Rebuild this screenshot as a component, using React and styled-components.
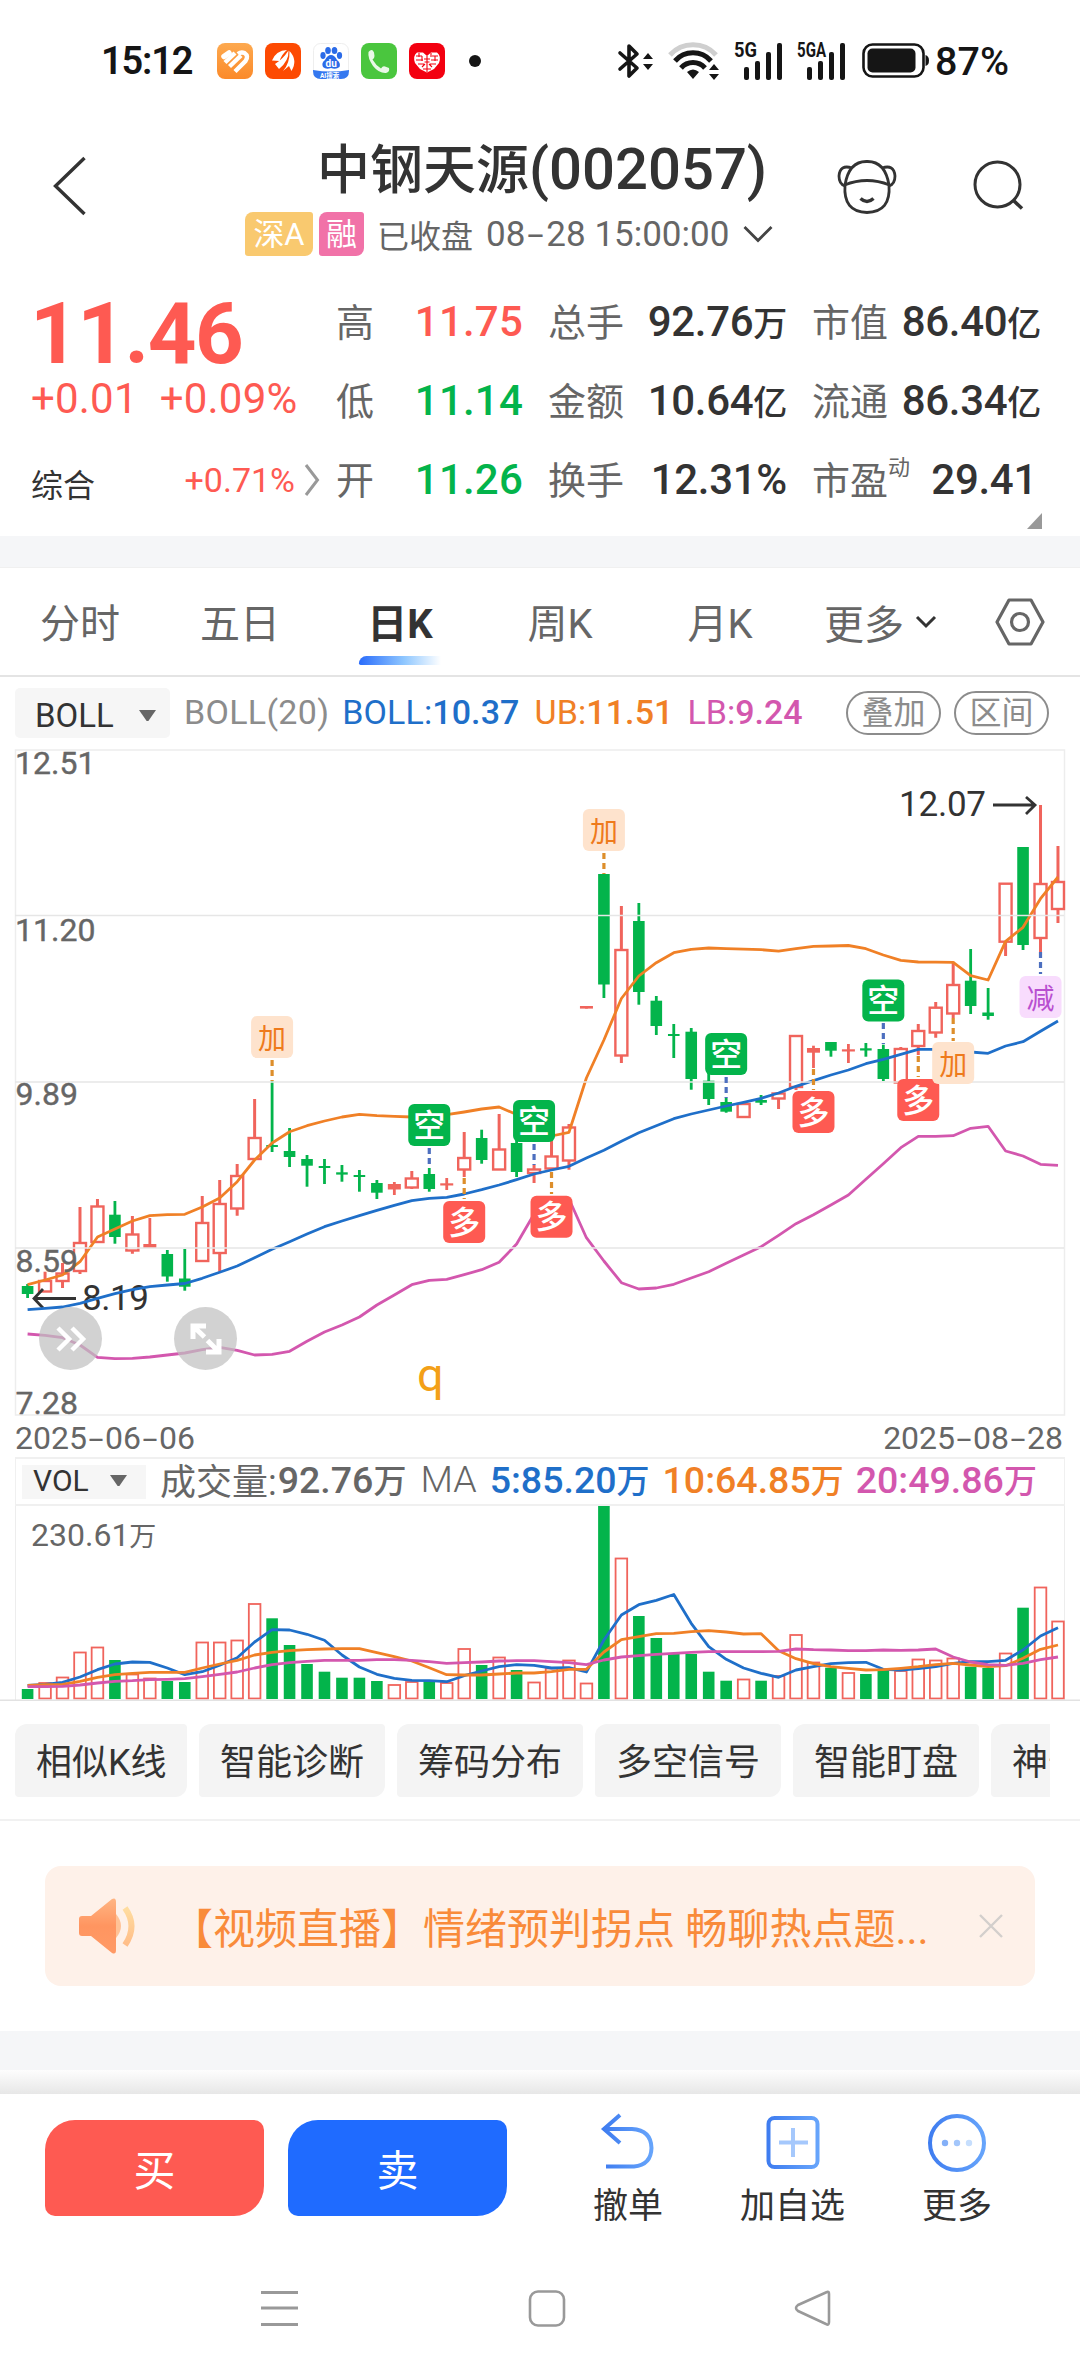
import { useState } from "react";
import styled, { createGlobalStyle } from "styled-components";

const RED = "#f0645c";
const GREEN = "#03b44b";
const BLUE = "#1f6fc9";
const ORANGE = "#f08026";
const PINK = "#d357ae";

const GlobalStyle = createGlobalStyle`
  * { box-sizing: border-box; }
  body {
    margin: 0;
    background: #fff;
    font-family: Roboto, "Noto Sans CJK SC", sans-serif;
    color: #333;
  }
  svg { display: block; flex: none; overflow: visible; }
`;

// [kind, high, top, bottom, low] : r = 양봉(빈 박스), f = 꽉 찬 빨강, g = 초록
const candles = [
  ["g", 1284, 1286, 1294, 1298], ["r", 1271.7, 1281, 1291.5, 1291.5], ["r", 1263, 1273.5, 1281, 1288],
  ["r", 1207, 1243, 1271, 1274], ["r", 1199, 1206.5, 1242, 1242], ["g", 1201, 1214.7, 1237, 1243.7],
  ["r", 1216, 1234.5, 1250.5, 1253.7], ["f", 1218, 1244, 1248, 1248], ["g", 1250, 1254, 1276.5, 1281.7],
  ["g", 1249, 1278.5, 1286.7, 1290.7], ["r", 1196, 1223, 1261, 1261], ["r", 1180, 1204, 1253, 1271.7],
  ["r", 1164, 1176, 1208.5, 1215.7], ["r", 1099, 1138, 1159, 1159], ["g", 1081, 1145, 1147, 1152],
  ["g", 1128, 1151, 1157, 1167], ["g", 1155, 1159, 1165.7, 1186.7], ["g", 1159, 1166, 1168, 1184],
  ["g", 1165, 1172.3, 1174.6, 1181.7], ["g", 1170, 1175, 1177, 1191.7], ["g", 1180, 1183, 1192.7, 1199],
  ["f", 1182, 1184, 1189.5, 1195], ["r", 1171, 1178.5, 1187.5, 1189], ["g", 1168, 1174, 1189, 1191.7],
  ["f", 1178, 1183.3, 1185.5, 1190], ["r", 1132, 1158, 1169.5, 1177], ["g", 1129.7, 1138, 1160, 1163.7],
  ["r", 1114, 1149.5, 1169.5, 1169.5], ["g", 1141, 1143, 1172, 1177], ["r", 1165, 1169.5, 1173, 1183],
  ["r", 1141, 1156.5, 1168.5, 1170], ["r", 1124, 1127.5, 1160.5, 1169.7], ["f", 1006, 1006, 1008.6, 1008.6],
  ["g", 874, 874, 984.5, 998], ["r", 906, 950, 1055.5, 1063], ["g", 903, 921, 992, 1004.7],
  ["g", 996, 1000.7, 1026, 1035], ["g", 1024, 1034, 1036, 1058], ["g", 1028, 1031.7, 1079, 1089.7],
  ["g", 1068, 1080.7, 1099, 1105], ["g", 1098, 1102, 1111.7, 1112.7], ["r", 1104, 1104, 1117, 1117],
  ["g", 1095, 1100, 1102.7, 1105], ["r", 1093.5, 1093.5, 1098.5, 1109], ["r", 1036, 1036, 1087, 1090],
  ["f", 1045.7, 1048, 1052.7, 1068], ["g", 1042, 1042, 1050.7, 1056.7], ["f", 1044, 1049.3, 1051.5, 1063],
  ["g", 1043, 1048.3, 1050.5, 1056.7], ["g", 1044.7, 1049, 1079, 1081], ["r", 1047, 1049, 1082.5, 1082.5],
  ["r", 1024, 1031, 1046, 1055], ["r", 1002, 1007.7, 1032.5, 1037.7], ["r", 961.7, 985, 1013.5, 1018],
  ["g", 949, 980.7, 1006, 1014], ["g", 988, 1012.5, 1016, 1019.7], ["r", 883.7, 883.7, 941.7, 956],
  ["g", 847, 847, 945, 950], ["r", 805, 884, 938, 952], ["r", 846, 882, 909, 923],
];

const upper = [
  1284.7, 1280, 1275, 1261.7, 1237, 1229, 1221, 1215.7, 1214.7, 1214.3, 1207, 1198, 1181.7, 1160, 1143, 1131.7,
  1125.7, 1121, 1117, 1114.3, 1115.7, 1116.3, 1117, 1116.7, 1114.7, 1112, 1109, 1107, 1114.5, 1131, 1136, 1132.3,
  1078, 1040, 998.5, 976, 962.7, 952.7, 949.3, 948, 948.7, 949.2, 949.7, 951.2, 948.7, 946.4, 946, 945.5, 948.7,
  955, 960.3, 962, 962.2, 962.4, 975.7, 980, 941.3, 927.3, 898.7, 877,
];
const middle = [
  1309.7, 1308.3, 1307, 1303.3, 1298.3, 1293.7, 1289.7, 1286.7, 1285, 1283.5, 1278.3, 1272.3, 1266, 1257.7, 1249.3,
  1241.7, 1234, 1226.7, 1221, 1215.7, 1210.3, 1205.3, 1200.7, 1198.3, 1197.3, 1194, 1189.7, 1185, 1179.7, 1174, 1170,
  1166.3, 1158, 1150.3, 1141.3, 1132.7, 1125.7, 1118.7, 1114, 1110, 1106, 1102.3, 1098.3, 1093, 1086.3, 1080.7, 1075,
  1070, 1063.7, 1059.3, 1054.3, 1049.3, 1049.3, 1050, 1052, 1053.3, 1046, 1041.7, 1031.3, 1021,
];
const lower = [
  1334, 1335.3, 1337.7, 1345, 1357.3, 1358.7, 1358.3, 1357, 1355, 1353, 1349.7, 1347.3, 1350.3, 1355, 1354.3, 1351.3,
  1341.3, 1332, 1325, 1317, 1305, 1295, 1284.7, 1280.3, 1279.3, 1274.7, 1269.7, 1262.3, 1244, 1214, 1203, 1199,
  1237.7, 1261, 1282.7, 1289, 1288, 1284.3, 1278, 1271.7, 1263.3, 1255, 1246.7, 1235.3, 1223.7, 1214.7, 1205, 1195,
  1179.3, 1163.7, 1147.7, 1136.3, 1136.3, 1135.7, 1128.3, 1126.3, 1151, 1156, 1164.3, 1165.3,
];

const volumes = [
  1689, 1683, 1677.5, 1652.5, 1647.5, 1660, 1674.5, 1678.5, 1681, 1682, 1642.5, 1642.5, 1640.5, 1604, 1618.3, 1645,
  1664, 1671.7, 1677.7, 1677.7, 1681, 1685, 1682, 1680.7, 1683, 1649, 1665, 1657.5, 1670, 1682.5, 1668.5, 1660.5,
  1683.5, 1506, 1558.5, 1616, 1638, 1653.7, 1654, 1671.7, 1680.7, 1679.5, 1680.7, 1676, 1635, 1662.5, 1667.7, 1673,
  1674, 1670, 1671, 1659.5, 1660.5, 1658.5, 1666.7, 1668, 1653.5, 1607.7, 1587.5, 1621.5,
];
const ma5 = [
  1685.3, 1684.3, 1682.3, 1677, 1669.7, 1664, 1662, 1662.3, 1668, 1674.7, 1671.7, 1665.3, 1657.7, 1642, 1629.7, 1630,
  1634.3, 1640.3, 1655, 1667, 1674.3, 1678.3, 1680.3, 1680.7, 1681.7, 1675.7, 1671, 1666.7, 1664.7, 1665.3, 1668,
  1667.7, 1672, 1640, 1615, 1604.7, 1600.3, 1594.5, 1623.3, 1646.7, 1659.3, 1668, 1673.3, 1677.3, 1670, 1666.7,
  1663.7, 1662.7, 1662.3, 1669.3, 1670, 1668.7, 1666.7, 1663.3, 1661.7, 1661.7, 1660.3, 1650, 1636, 1627.7,
];
const ma10 = [
  1685.3, 1684.7, 1684.3, 1681.3, 1677.3, 1674.7, 1673.3, 1672.3, 1672.3, 1672.3, 1668, 1664, 1660.3, 1655, 1652.3,
  1650.7, 1649.7, 1649, 1648.7, 1648.7, 1652.7, 1656.7, 1661, 1667.7, 1674.7, 1675, 1675, 1674, 1673, 1673, 1671.7,
  1669.3, 1669.3, 1652, 1639.7, 1636.7, 1633.7, 1633.3, 1631.7, 1630.7, 1632, 1634, 1633.7, 1650.7, 1658.7, 1663.7,
  1666.7, 1668.3, 1670, 1669.7, 1668.3, 1666.7, 1664.7, 1663.3, 1665, 1666.7, 1665.7, 1658.3, 1649.3, 1645,
];
const ma20 = [
  1686.7, 1686.7, 1686.3, 1685, 1683, 1681.3, 1680.7, 1679.7, 1679.3, 1678.7, 1676.7, 1674.3, 1672, 1668, 1664.7,
  1662.7, 1661.3, 1660.3, 1660.3, 1660.3, 1659.7, 1659.7, 1660.3, 1661.7, 1663.3, 1662.7, 1662, 1661, 1660.7, 1660.7,
  1661.7, 1662.7, 1664.7, 1660, 1657, 1655.7, 1654.3, 1653.3, 1652.3, 1651.7, 1651.7, 1651.7, 1651.7, 1651.3, 1649,
  1649.7, 1650, 1650.7, 1650.7, 1650, 1650.3, 1650, 1649, 1657, 1662, 1664.7, 1665.3, 1663.3, 1659.7, 1657,
];

// [캔들 index, 글자, 배지 top, 점선 y1, 점선 y2]
const signals = [
  [14, "加", 1016, 1060, 1081], [33, "加", 809, 853, 874], [23, "空", 1104, 1148, 1168], [29, "空", 1100, 1144, 1165],
  [40, "空", 1033, 1077, 1098], [49, "空", 979.5, 1023, 1044], [25, "多", 1201, 1178, 1199], [30, "多", 1195.7, 1172, 1194],
  [45, "多", 1091, 1069, 1090], [51, "多", 1079, 1056, 1077], [53, "加", 1042, 1018, 1041], [58, "减", 976, 952, 974],
];
const signalColors = {
  加: ["#fee3cd", "#ee7a1c", "#dd8e2b"],
  减: ["#f8dcfd", "#b84fd0", "#4d6fbf"],
  空: ["#03b44b", "#fff", "#4d6fbf"],
  多: ["#fe5a52", "#fff", "#dd8e2b"],
};

const xOf = (i) => 27.6 + i * 17.464;
const line = (arr) => arr.map((y, i) => `${xOf(i).toFixed(1)},${y}`).join(" ");

const Screen = styled.div`
  width: 1080px;
  height: 2374px;
  overflow: hidden;
  background: #fff;
  display: flex;
  flex-direction: column;
`;

const StatusBar = styled.div`
  height: 120px;
  padding: 2px 65px 0 101px;
  display: flex;
  align-items: center;
  flex: none;
`;
const Clock = styled.span`
  width: 116px;
  font-size: 38px;
  font-weight: 600;
  letter-spacing: -1.2px;
  color: #151515;
`;
const AppIcons = styled.div`
  display: flex;
  align-items: center;
  gap: 12px;
`;
const Dot = styled.i`
  width: 12px;
  height: 12px;
  margin-left: 12px;
  border-radius: 50%;
  background: #151515;
`;
const StatusRight = styled.div`
  margin-left: auto;
  display: flex;
  align-items: center;
`;
const BatteryText = styled.span`
  margin-left: 5px;
  width: 80px;
  font-size: 39.5px;
  font-weight: 500;
  color: #151515;
`;

const Header = styled.header`
  height: 150px;
  flex: none;
  display: grid;
  grid-template-columns: 245px 591px 1fr;
`;
const BackBox = styled.div`
  padding: 36px 0 0 52px;
`;
const TitleBox = styled.div`
  padding-top: 14px;
`;
const Title = styled.h1`
  margin: 0 0 8px;
  padding-left: 72px;
  height: 70px;
  line-height: 70px;
  font-size: 53px;
  font-weight: 500;
  white-space: nowrap;
  span { font-size: 58px; }
`;
const SubRow = styled.div`
  display: flex;
  align-items: center;
  height: 44px;
  font-size: 32px;
  color: #666;
  white-space: nowrap;
`;
const Tag = styled.span`
  height: 44px;
  line-height: 45px;
  width: ${(p) => p.$w}px;
  margin-right: 6px;
  border-radius: 8px 3px 8px 3px;
  background: ${(p) => p.$bg};
  color: #fff;
  text-align: center;
  font-size: 31px;
`;
const Closed = styled.span`
  margin: 0 13px 0 7px;
`;
const Time = styled.span`
  font-size: 35px;
  width: 257px;
`;
const Dash = styled.span`
  display: inline-block;
  width: ${(p) => p.$w || 18}px;
  text-align: center;
  transform: scaleX(1.7);
`;
const HeaderIcons = styled.div`
  display: flex;
  gap: 74px;
  padding-top: 38px;
`;

const Quote = styled.section`
  height: 266px;
  flex: none;
  display: flex;
  padding: 12px 38px 0 31px;
`;
const PriceCol = styled.div`
  width: 305px;
  padding-top: 10px;
  color: #fe5a52;
  white-space: nowrap;
`;
const Price = styled.div`
  margin-left: -1px;
  line-height: 84px;
  font-size: 85px;
  font-weight: 700;
  letter-spacing: -1.5px;
`;
const Change = styled.div`
  display: flex;
  gap: 22px;
  line-height: 46px;
  font-size: 42px;
  letter-spacing: 0.2px;
`;
const IndexRow = styled.div`
  display: flex;
  align-items: center;
  margin-top: 28px;
  height: 60px;
  width: 289px;
  font-size: 34px;
  b {
    font-weight: 400;
    font-size: 32px;
    color: #333;
    padding-top: 5px;
    margin-right: auto;
  }
  svg { margin-left: 9px; }
`;
const Stats = styled.div`
  flex: 1;
  display: grid;
  grid-template-columns: 187px 239px 229px;
  grid-template-rows: repeat(3, 79px);
  column-gap: 25px;
  align-content: start;
`;
const Stat = styled.div`
  display: flex;
  justify-content: space-between;
  align-items: baseline;
  line-height: 79px;
  font-size: 38px;
  color: #666;
  white-space: nowrap;
  sup {
    font-size: 22px;
    line-height: 0;
    vertical-align: 19px;
  }
`;
const StatValue = styled.span`
  font-size: 42px;
  font-weight: 500;
  letter-spacing: ${(p) => (p.$color ? 0.2 : -0.3)}px;
  margin-right: ${(p) => p.$mr || 0}px;
  color: ${(p) => p.$color || "#333"};
  small { font-size: 34px; }
`;
const Corner = styled.i`
  align-self: flex-end;
  width: 15px;
  height: 16px;
  margin: 0 0 7px -22px;
  background: #999;
  clip-path: polygon(100% 0, 100% 100%, 0 100%);
`;

const Band = styled.div`
  height: ${(p) => p.$h}px;
  flex: none;
  background: #f5f6f8;
`;

const Tabs = styled.nav`
  height: 110px;
  flex: none;
  display: flex;
  border-bottom: 2px solid #e4e4e4;
  border-top: 1px solid #f0f0f0;
`;
const Tab = styled.div`
  width: 160px;
  height: 108px;
  display: flex;
  flex-direction: column;
  align-items: center;
  padding: 33px 0 0;
  line-height: 48px;
  font-size: 40px;
  white-space: nowrap;
  font-weight: ${(p) => (p.$on ? 700 : 400)};
  color: ${(p) => (p.$on ? "#333" : "#666")};
  &::after {
    content: "";
    display: ${(p) => (p.$on ? "block" : "none")};
    width: 82px;
    height: 9px;
    margin-top: 7px;
    border-radius: 9px 0 0 2px;
    background: linear-gradient(90deg, #2a6cfb, #8fc7ff 55%, #fff);
  }
`;
const MoreTab = styled.div`
  width: 195px;
  padding: 28px 0 0 24px;
  display: flex;
  gap: 11px;
  height: 80px;
  align-items: center;
  font-size: 40px;
  color: #666;
`;
const HexBox = styled.div`
  padding-top: 30px;
`;

const BollRow = styled.div`
  height: 72px;
  flex: none;
  display: flex;
  align-items: center;
  padding: 0 31px 0 15px;
`;
const Select = styled.div`
  display: flex;
  align-items: center;
  justify-content: space-between;
  width: ${(p) => p.$w}px;
  height: ${(p) => p.$h}px;
  padding: ${(p) => p.$pad};
  font-size: ${(p) => p.$fs}px;
  line-height: 1;
  border-radius: ${(p) => p.$r || 0}px;
  background: #f6f6f6;
  color: #333;
`;
const Caret = styled.i`
  width: 17px;
  height: 11px;
  background: #666;
  clip-path: polygon(0 0, 100% 0, 55% 100%, 45% 100%);
`;
const Info = styled.span`
  margin-left: ${(p) => p.$ml}px;
  font-size: ${(p) => p.$fs || 34}px;
  font-weight: ${(p) => p.$fw || 400};
  letter-spacing: ${(p) => p.$ls || 0}px;
  color: ${(p) => p.$color};
  padding-bottom: ${(p) => p.$pb || 2}px;
  white-space: nowrap;
  small { font-size: 33px; }
  b { font-weight: 500; }
`;
const Pills = styled.div`
  display: flex;
  gap: 13px;
  margin-left: auto;
`;
const Pill = styled.span`
  width: 95px;
  height: 44px;
  line-height: 41px;
  text-align: center;
  border: 2px solid #8c8c8c;
  border-radius: 22px;
  color: #8c8c8c;
  font-size: 32px;
`;

const ChartBox = styled.div`
  position: relative;
  height: 708px;
  flex: none;
`;
const RoundBtn = styled.button`
  position: absolute;
  left: ${(p) => p.$x}px;
  top: 558px;
  width: 63px;
  height: 63px;
  padding: 0;
  border: 0;
  border-radius: 50%;
  background: rgba(193, 193, 193, 0.72);
  display: grid;
  place-items: center;
`;
const VolRow = styled.div`
  height: 49px;
  flex: none;
  margin: 0 15px;
  padding: 0 0 0 6px;
  display: flex;
  align-items: center;
  border: 1px solid #f0f0f0;
  border-width: 2px 1px;
`;

const Chips = styled.div`
  flex: none;
  height: 120px;
  border-bottom: 2px solid #f1f1f1;
  padding: 23px 30px 0 15px;
`;
const ChipTrack = styled.div`
  display: flex;
  gap: 12px;
  overflow: hidden;
`;
const Chip = styled.div`
  flex: none;
  height: 73px;
  width: ${(p) => p.$w || 186}px;
  padding-left: 21px;
  line-height: 79px;
  border-radius: 12px 4px;
  background: #f4f4f4;
  font-size: 36px;
  white-space: nowrap;
  overflow: hidden;
`;

const NoticeWrap = styled.div`
  flex: none;
  height: 210px;
  padding: 45px 45px 0;
`;
const Notice = styled.div`
  height: 120px;
  display: flex;
  align-items: center;
  padding: 0 32px 0 34px;
  border-radius: 16px;
  background: #fef1e9;
  color: #f98b3a;
  font-size: 42px;
  p {
    margin: 0 0 0 34px;
    padding-top: 7px;
    width: 765px;
    line-height: 60px;
    white-space: nowrap;
  }
  svg:last-child { margin-left: auto; }
`;

const Shade = styled.div`
  height: 24px;
  flex: none;
  background: linear-gradient(#fdfdfd, #e7e7e7);
`;
const Toolbar = styled.div`
  height: 150px;
  flex: none;
  display: flex;
  padding: 26px 0 0 45px;
`;
const Trade = styled.button`
  width: 219px;
  height: 96px;
  margin-right: 24px;
  padding: 0 0 2px;
  border: 0;
  border-radius: 30px 10px;
  background: ${(p) => p.$bg};
  color: #fff;
  font: inherit;
  font-size: 42px;
`;
const Tools = styled.div`
  display: flex;
  margin-left: 22px;
`;
const Tool = styled.div`
  width: ${(p) => p.$w}px;
  display: flex;
  flex-direction: column;
  align-items: center;
  gap: 13px;
  margin-top: -8px;
  font-size: 35px;
  line-height: 44px;
`;
const NavBar = styled.div`
  flex: 1;
  display: flex;
  padding: 45px 0 0 261px;
`;
const NavItem = styled.div`
  width: ${(p) => p.$w}px;
`;

function StatusIcons() {
  return (
    <StatusRight>
      <svg width="40" height="40" viewBox="0 0 40 40" fill="none" stroke="#151515" strokeWidth="3.600">
        <path d="M3 12 L20 27 L12 35 V5 L20 13 L3 28" strokeLinejoin="round" strokeLinecap="round" />
        <path d="M26 18 L31 12 L36 18Z M26 23 L31 29 L36 23Z" fill="#151515" stroke="none" />
      </svg>
      <svg width="54" height="40" viewBox="0 0 54 40" fill="none" strokeWidth="5" style={{ marginLeft: 10 }}>
        <path d="M3 14 A31 31 0 0 1 49 14" stroke="#cfcfcf" />
        <path d="M8 20 A24 24 0 0 1 44 20" stroke="#151515" />
        <path d="M14 27 A16 16 0 0 1 38 27" stroke="#151515" />
        <path d="M20 31 Q26 26 32 31 L26 38Z M42 29 L47 23 L52 29Z M42 33 L47 39 L52 33Z" fill="#151515" />
      </svg>
      {["5G", "5GA"].map((name, i) => (
        <svg key={name} width="50" height="40" viewBox="0 0 50 40" fill="#151515" style={{ marginLeft: 13 }}>
          <text x="0" y="16" fontSize="21" fontWeight="700" textLength={i ? 29 : 23} lengthAdjust="spacingAndGlyphs">{name}</text>
          <rect x="10" y="26" width="5" height="13" rx="2" />
          <rect x="21" y="20" width="5" height="19" rx="2" />
          <rect x="32" y="11" width="5" height="28" rx="2" />
          <rect x="43" y="2" width="5" height="37" rx="2" />
        </svg>
      ))}
      <svg width="68" height="36" viewBox="0 0 68 36" style={{ marginLeft: 15 }}>
        <rect x="1.500" y="1.500" width="60" height="32" rx="9" fill="none" stroke="#151515" strokeWidth="2.600" />
        <rect x="5.500" y="5.500" width="48" height="24" rx="5" fill="#151515" />
        <path d="M63.500 12 Q67 13 67 17.500 Q67 22 63.500 23Z" fill="#151515" />
      </svg>
      <BatteryText>87%</BatteryText>
    </StatusRight>
  );
}

function NotificationIcons() {
  return (
    <AppIcons>
      <svg width="36" height="36" viewBox="0 0 36 36">
        <defs>
          <linearGradient id="heartBg" x1="0" y1="0" x2="0" y2="1">
            <stop offset="0" stopColor="#fda94f" />
            <stop offset="1" stopColor="#fb8a2a" />
          </linearGradient>
        </defs>
        <rect width="36" height="36" rx="8" fill="url(#heartBg)" />
        <g fill="none" stroke="#fff" strokeWidth="4.400">
          <path d="M7 13.500 L12 10" strokeWidth="5.500" strokeLinecap="round" />
          <path d="M8 19.500 L18 10" />
          <path d="M12.500 23.500 L24 12.500" />
          <path d="M18 28.500 L28.500 18 Q32 13 27.500 10 Q24 8.500 21 11" />
        </g>
      </svg>
      <svg width="36" height="36" viewBox="0 0 36 36">
        <rect width="36" height="36" rx="8" fill="#fd4a02" />
        <path d="M7 17.500 Q11 7.500 22 7 Q17 11 14.500 18Z M14 26 L10 21 Q18 16 23.500 7.500 Q24 18 14 26Z M18 28 Q25 20 24.500 8 Q33 17 26.500 28 L24 23Z" fill="#fff" />
      </svg>
      <svg width="36" height="36" viewBox="0 0 36 36">
        <rect x=".5" y=".5" width="35" height="35" rx="7" fill="#fff" stroke="#eee" />
        <g fill="#2b6be8">
          <ellipse cx="10" cy="12.500" rx="2.600" ry="3.400" />
          <ellipse cx="15" cy="7.500" rx="2.800" ry="3.600" />
          <ellipse cx="21.500" cy="7.500" rx="2.800" ry="3.600" />
          <ellipse cx="26.500" cy="12.500" rx="2.600" ry="3.400" />
          <path d="M18 12 Q21.500 12 24 17 Q28 20 26.500 24 Q23 27 18 25 Q13 27 10 24 Q8 20 12 17 Q14.500 12 18 12Z" />
        </g>
        <text x="12.500" y="24" fontSize="10" fontWeight="700" fill="#fff">du</text>
        <path d="M0 27 Q18 30 36 27 V28 Q36 36 28 36 H8 Q0 36 0 28Z" fill="#3478f0" />
        <text x="7" y="34.500" fontSize="6.500" fontWeight="700" fill="#fff">AI搜索</text>
      </svg>
      <svg width="36" height="36" viewBox="0 0 36 36">
        <rect width="36" height="36" rx="8" fill="#4ac63e" />
        <path d="M7.500 9 Q11 5 13 9.500 L13.500 13 Q13.500 15.500 11.500 16.500 Q14.500 22 20 25.500 Q22 22.500 24 23.500 L28 25 Q29 29 25 30 Q18 30.500 12 23 Q6.500 15 7.500 9Z" fill="#fff" opacity=".88" />
      </svg>
      <svg width="36" height="36" viewBox="0 0 36 36">
        <rect width="36" height="36" rx="8" fill="#f30010" />
        <path d="M18 29.500 L11 26 L6 20 Q3.500 13 8 9.500 H14 L18 13 L22 9.500 H28 Q32.500 13 30 20 L25 26Z" fill="#fff" />
        <path d="M7 13 H13 M7 17 H14 M9 21 H15 M10 10 V14 M13 13 V18 M22 10 V14 M23 13 H29 M22 17 H29 M21 21 H27 M26 13 V18 M15 16 H21 M18 13 V29 M15.500 19 H20.500 M13 24 L16 21 M23 24 L20 21 M14 26 H22" stroke="#f30010" strokeWidth="1.100" fill="none" />
      </svg>
      <Dot />
    </AppIcons>
  );
}

function Candle({ data, i }) {
  const [kind, high, top, bottom, low] = data;
  const x = xOf(i);
  const color = kind === "g" ? GREEN : RED;
  if (kind === "r") {
    return (
      <g stroke={color} strokeWidth="2.400" fill="none">
        <path d={`M${x} ${high}V${top}M${x} ${bottom}V${low}`} strokeWidth="3" />
        <rect x={x - 6} y={top} width="12" height={bottom - top} />
      </g>
    );
  }
  const w = kind === "f" ? 13 : 11.6;
  return (
    <g fill={color}>
      <rect x={x - 1.4} y={high} width="2.800" height={low - high} />
      <rect x={x - w / 2} y={top} width={w} height={bottom - top} />
    </g>
  );
}

function KChart() {
  return (
    <svg width="1080" height="708" viewBox="0 749 1080 708">
      <path d="M15.500 750H1064.500V1415H15.500Z" fill="none" stroke="#ededed" strokeWidth="1.500" />
      {candles.map((c, i) => <Candle key={i} data={c} i={i} />)}
      <g fontSize="35" fill="#333">
        <text x="82" y="1310" textLength="67">8.19</text>
        <text x="899" y="816" textLength="87">12.07</text>
        <path d="M33.500 1298.500H76M43 1289L34 1298.500L43 1308M993 805H1035M1026 797L1035 805L1026 814" fill="none" stroke="#333" strokeWidth="2.800" />
      </g>
      <g fill="none" strokeWidth="2.800" strokeLinejoin="round">
        <polyline points={line(lower)} stroke={PINK} />
        <polyline points={line(middle)} stroke={BLUE} />
        <polyline points={line(upper)} stroke={ORANGE} />
      </g>
      <path d="M15 915.500H1064M15 1082H1064M15 1248H1064" stroke="#e6e6e6" strokeWidth="1.600" />
      {signals.map(([i, word, top, y1, y2]) => {
        const [bg, fg, dash] = signalColors[word];
        const solid = fg === "#fff";
        return (
          <g key={i}>
            <path d={`M${xOf(i)} ${y1}V${y2}`} stroke={dash} strokeWidth="3.200" strokeDasharray="6 4" />
            <rect x={xOf(i) - 21} y={top} width="42" height="42" rx="6" fill={bg} />
            <text x={xOf(i)} y={top + 32.5} fontSize={solid ? 32 : 28} fontWeight={solid ? 500 : 400} fill={fg} textAnchor="middle">{word}</text>
          </g>
        );
      })}
      <g fontSize="32" fill="#666" stroke="#666" strokeWidth=".4">
        <text x="15" y="774">12.51</text>
        <text x="15" y="940.500">11.20</text>
        <text x="15.500" y="1105">9.89</text>
        <text x="15.500" y="1272">8.59</text>
        <text x="15.500" y="1414">7.28</text>
      </g>
      <text x="417" y="1391" fontSize="47" fill="#f3a018">q</text>
    </svg>
  );
}

const Dates = styled.div`
  position: absolute;
  left: 15px;
  right: 17px;
  bottom: -1px;
  height: 40px;
  line-height: 40px;
  display: flex;
  justify-content: space-between;
  font-size: 32px;
  color: #666;
`;

function VolumeChart() {
  return (
    <svg width="1080" height="195" viewBox="0 1506 1080 195">
      <path d="M15.500 1506V1700M1064.500 1506V1700" stroke="#ededed" />
      <text x="31" y="1545.500" fontSize="32" fill="#666">230.61<tspan fontSize="27">万</tspan></text>
      {volumes.map((top, i) => {
        const x = xOf(i);
        return candles[i][0] === "g" ? (
          <rect key={i} x={x - 5.8} y={top} width="11.600" height={1699 - top} fill={GREEN} />
        ) : (
          <rect key={i} x={x - 5.8} y={top} width="11.600" height={1698.5 - top} fill="none" stroke={RED} strokeWidth="1.800" />
        );
      })}
      <g fill="none" strokeWidth="2.800" strokeLinejoin="round">
        <polyline points={line(ma5)} stroke={BLUE} />
        <polyline points={line(ma10)} stroke={ORANGE} />
        <polyline points={line(ma20)} stroke={PINK} />
      </g>
      <path d="M0 1700.300H1080" stroke="#e2e2e2" strokeWidth="1.400" />
    </svg>
  );
}

const stats = [
  ["高", "11.75", "", "#fe5a52"], ["总手", "92.76", "万"], ["市值", "86.40", "亿"],
  ["低", "11.14", "", GREEN], ["金额", "10.64", "亿"], ["流通", "86.34", "亿"],
  ["开", "11.26", "", GREEN], ["换手", "12.31%", ""], ["市盈", "29.41", ""],
];

export default function App() {
  let [tabs] = useState(["分时", "五日", "日K", "周K", "月K"]);
  let [selectedTab, setSelectedTab] = useState(2);
  let [chips] = useState(["相似K线", "智能诊断", "筹码分布", "多空信号", "智能盯盘", "神奇"]);

  return (
    <Screen>
      <GlobalStyle />
      <StatusBar>
        <Clock>15:12</Clock>
        <NotificationIcons />
        <StatusIcons />
      </StatusBar>

      <Header>
        <BackBox>
          <svg width="36" height="60" viewBox="0 0 36 60" fill="none" stroke="#333" strokeWidth="3.400">
            <path d="M32.500 2 L3.500 30 L32.500 58" />
          </svg>
        </BackBox>
        <TitleBox>
          <Title>中钢天源<span>(002057)</span></Title>
          <SubRow>
            <Tag $w={68} $bg="#f9c96f">深A</Tag>
            <Tag $w={45} $bg="#f172a8">融</Tag>
            <Closed>已收盘</Closed>
            <Time>08<Dash $w={21}>-</Dash>28 15:00:00</Time>
            <svg width="30" height="18" viewBox="0 0 30 18" fill="none" stroke="#444" strokeWidth="2.800">
              <path d="M1.500 2 L15 15.500 L28.500 2" />
            </svg>
          </SubRow>
        </TitleBox>
        <HeaderIcons>
          <svg width="62" height="60" viewBox="0 0 62 60" fill="none" stroke="#333" strokeWidth="2.800">
            <path d="M9 27 Q13 3 31 3.500 Q49 3 53 27" />
            <path d="M8.500 27 Q31 18 53.500 27" />
            <path d="M16 10 Q4 6 3 18 Q3 26 9 28 M46 10 Q58 6 59 18 Q59 26 53 28" />
            <path d="M9 27 Q7 54 31 54.500 Q55 54 53 27" />
            <path d="M24.500 40.500 Q31 46.500 37.500 40.500" strokeWidth="3.400" />
          </svg>
          <svg width="54" height="54" viewBox="0 0 54 54" fill="none" stroke="#333" strokeWidth="3">
            <circle cx="25.500" cy="26.500" r="22.500" />
            <path d="M41.500 42.500 L50 50.500" strokeWidth="3.600" />
          </svg>
        </HeaderIcons>
      </Header>

      <Quote>
        <PriceCol>
          <Price>11.46</Price>
          <Change>
            <span>+0.01</span>
            <span>+0.09%</span>
          </Change>
          <IndexRow>
            <b>综合</b>
            +0.71%
            <svg width="16" height="32" viewBox="0 0 16 32" fill="none" stroke="#999" strokeWidth="3">
              <path d="M2 1 L13.500 16 L2 31" />
            </svg>
          </IndexRow>
        </PriceCol>
        <Stats>
          {stats.map(([label, value, unit, color]) => (
            <Stat key={label}>
              <span>{label}{label === "市盈" ? <sup>动</sup> : null}</span>
              <StatValue $color={color} $mr={label === "市盈" ? 4 : 0}>{value}<small>{unit}</small></StatValue>
            </Stat>
          ))}
        </Stats>
        <Corner />
      </Quote>
      <Band $h={31} />

      <Tabs>
        {tabs.map((name, i) => (
          <Tab key={name} $on={selectedTab === i} onClick={() => setSelectedTab(i)}>{name}</Tab>
        ))}
        <MoreTab>
          更多
          <svg width="22" height="14" viewBox="0 0 22 14" fill="none" stroke="#333" strokeWidth="3">
            <path d="M2 2 L11 11 L20 2" />
          </svg>
        </MoreTab>
        <HexBox>
          <svg width="50" height="48" viewBox="0 0 50 48" fill="none" stroke="#666" strokeWidth="3.200">
            <path d="M14 2 H36 L48 24 L36 46 H14 L2 24Z" strokeLinejoin="round" />
            <circle cx="25" cy="24" r="8.500" />
          </svg>
        </HexBox>
      </Tabs>

      <BollRow>
        <Select $w={155} $h={50} $pad="5px 14px 0 20px" $fs={33} $r={5}>BOLL<Caret /></Select>
        <Info $ml={14} $ls={0.3} $color="#8c8c8c">BOLL(20)</Info>
        <Info $ml={13} $ls={0.1} $color={BLUE}>BOLL:<b>10.37</b></Info>
        <Info $ml={15} $ls={0.1} $color={ORANGE}>UB:<b>11.51</b></Info>
        <Info $ml={14} $ls={0} $color={PINK}>LB:<b>9.24</b></Info>
        <Pills>
          <Pill>叠加</Pill>
          <Pill>区间</Pill>
        </Pills>
      </BollRow>

      <ChartBox>
        <KChart />
        <RoundBtn $x={39}>
          <svg width="32" height="28" viewBox="0 0 32 28" fill="none" stroke="#fff" strokeWidth="4.500">
            <path d="M3 3 L14 14 L3 25 M17 3 L28 14 L17 25" />
          </svg>
        </RoundBtn>
        <RoundBtn $x={174}>
          <svg width="34" height="34" viewBox="0 0 34 34" fill="none" stroke="#fff" strokeWidth="5">
            <path d="M4 17 V4 H17 M4 4 L15.500 15 M30 17 V30 H17 M18.500 18.500 L30 30" />
          </svg>
        </RoundBtn>
        <Dates>
          <span>2025<Dash>-</Dash>06<Dash>-</Dash>06</span>
          <span>2025<Dash>-</Dash>08<Dash>-</Dash>28</span>
        </Dates>
      </ChartBox>

      <VolRow>
        <Select $w={124} $h={34} $pad="0 19px 2px 11px" $fs={30}>VOL<Caret /></Select>
        <Info $ml={14} $fs={36} $pb={6} $color="#666">成交量:</Info>
        <Info $ml={1} $fs={37.5} $fw={500} $pb={5} $color="#666">92.76<small>万</small></Info>
        <Info $ml={14} $fs={37.5} $fw={300} $pb={5} $color="#666">MA</Info>
        <Info $ml={13} $fs={37.5} $fw={500} $pb={5} $color={BLUE}>5:85.20<small>万</small></Info>
        <Info $ml={13} $fs={37.5} $fw={500} $pb={5} $color={ORANGE}>10:64.85<small>万</small></Info>
        <Info $ml={12} $fs={37.5} $fw={500} $pb={5} $color={PINK}>20:49.86<small>万</small></Info>
      </VolRow>
      <VolumeChart />

      <Chips>
        <ChipTrack>
          {chips.map((name, i) => <Chip key={name} $w={i === 0 ? 172 : 186}>{name}</Chip>)}
        </ChipTrack>
      </Chips>

      <NoticeWrap>
        <Notice>
          <svg width="58" height="58" viewBox="0 0 58 58">
            <defs>
              <linearGradient id="horn" x1="0" y1="0" x2="0" y2="1">
                <stop offset="0" stopColor="#ffb583" />
                <stop offset=".5" stopColor="#ff9560" />
                <stop offset="1" stopColor="#ff9a66" />
              </linearGradient>
              <linearGradient id="wave" x1="0" y1="0" x2="0" y2="1">
                <stop offset="0" stopColor="#ffdda0" />
                <stop offset="1" stopColor="#ffbd88" />
              </linearGradient>
            </defs>
            <path d="M3 19 H12 L33 2 Q37 0 37 5 V53 Q37 58 33 56 L12 39 H3 Q0 39 0 36 V22 Q0 19 3 19Z" fill="url(#horn)" />
            <path d="M37 17 Q47 29 37 41Z" fill="#ffc296" />
            <path d="M46 11 Q59 29 46 48" fill="none" stroke="url(#wave)" strokeWidth="6" />
          </svg>
          <p>【视频直播】情绪预判拐点 畅聊热点题...</p>
          <svg width="24" height="24" viewBox="0 0 24 24" stroke="#d3cfcc" strokeWidth="2.400">
            <path d="M1 1 L23 23 M23 1 L1 23" />
          </svg>
        </Notice>
      </NoticeWrap>

      <Band $h={39} />
      <Shade />
      <Toolbar>
        <Trade $bg="#fe5a52">买</Trade>
        <Trade $bg="#1f6bff">卖</Trade>
        <svg width="0" height="0">
          <defs>
            <linearGradient id="tool" x1="0" y1="0" x2="1" y2="0">
              <stop offset="0" stopColor="#3f7df0" />
              <stop offset="1" stopColor="#66a4fb" />
            </linearGradient>
          </defs>
        </svg>
        <Tools>
          <Tool $w={150}>
            <svg width="60" height="60" viewBox="0 0 60 60" fill="none" stroke="url(#tool)" strokeWidth="4">
              <path d="M22 3 L6 17 L22 31 M6 17 H34 Q53 18 53.500 36 Q53 53 36 54.500 H8" />
            </svg>
            撤单
          </Tool>
          <Tool $w={179}>
            <svg width="60" height="60" viewBox="0 0 60 60" fill="none" stroke="url(#tool)" strokeWidth="4">
              <rect x="5.500" y="6" width="49" height="49" rx="6" />
              <path d="M16 30.400 H45 M30 16 V45.100" stroke="#a5c8fc" />
            </svg>
            加自选
          </Tool>
          <Tool $w={150}>
            <svg width="60" height="60" viewBox="0 0 60 60" fill="none" stroke="url(#tool)" strokeWidth="4">
              <circle cx="30" cy="31" r="27" />
              <g stroke="none">
                <circle cx="18" cy="31" r="3.200" fill="#84b0f8" />
                <circle cx="30" cy="31" r="3.200" fill="#a3c6fb" />
                <circle cx="42" cy="31" r="3.200" fill="#c6defd" />
              </g>
            </svg>
            更多
          </Tool>
        </Tools>
      </Toolbar>

      <NavBar>
        <NavItem $w={267}>
          <svg width="38" height="38" viewBox="0 0 38 38" stroke="#999" strokeWidth="2.800">
            <path d="M0 3.500 H37 M0 19 H37 M0 35.500 H37" />
          </svg>
        </NavItem>
        <NavItem $w={265}>
          <svg width="38" height="38" viewBox="0 0 38 38" fill="none" stroke="#999" strokeWidth="2.600">
            <rect x="2" y="2.500" width="34" height="34" rx="8" />
          </svg>
        </NavItem>
        <NavItem $w={40}>
          <svg width="38" height="38" viewBox="0 0 38 38" fill="none" stroke="#999" strokeWidth="2.600" strokeLinejoin="round">
            <path d="M34 3 Q36 2 36 5 V33 Q36 37 33 35 L5 22 Q1 19 5 16Z" />
          </svg>
        </NavItem>
      </NavBar>
    </Screen>
  );
}
